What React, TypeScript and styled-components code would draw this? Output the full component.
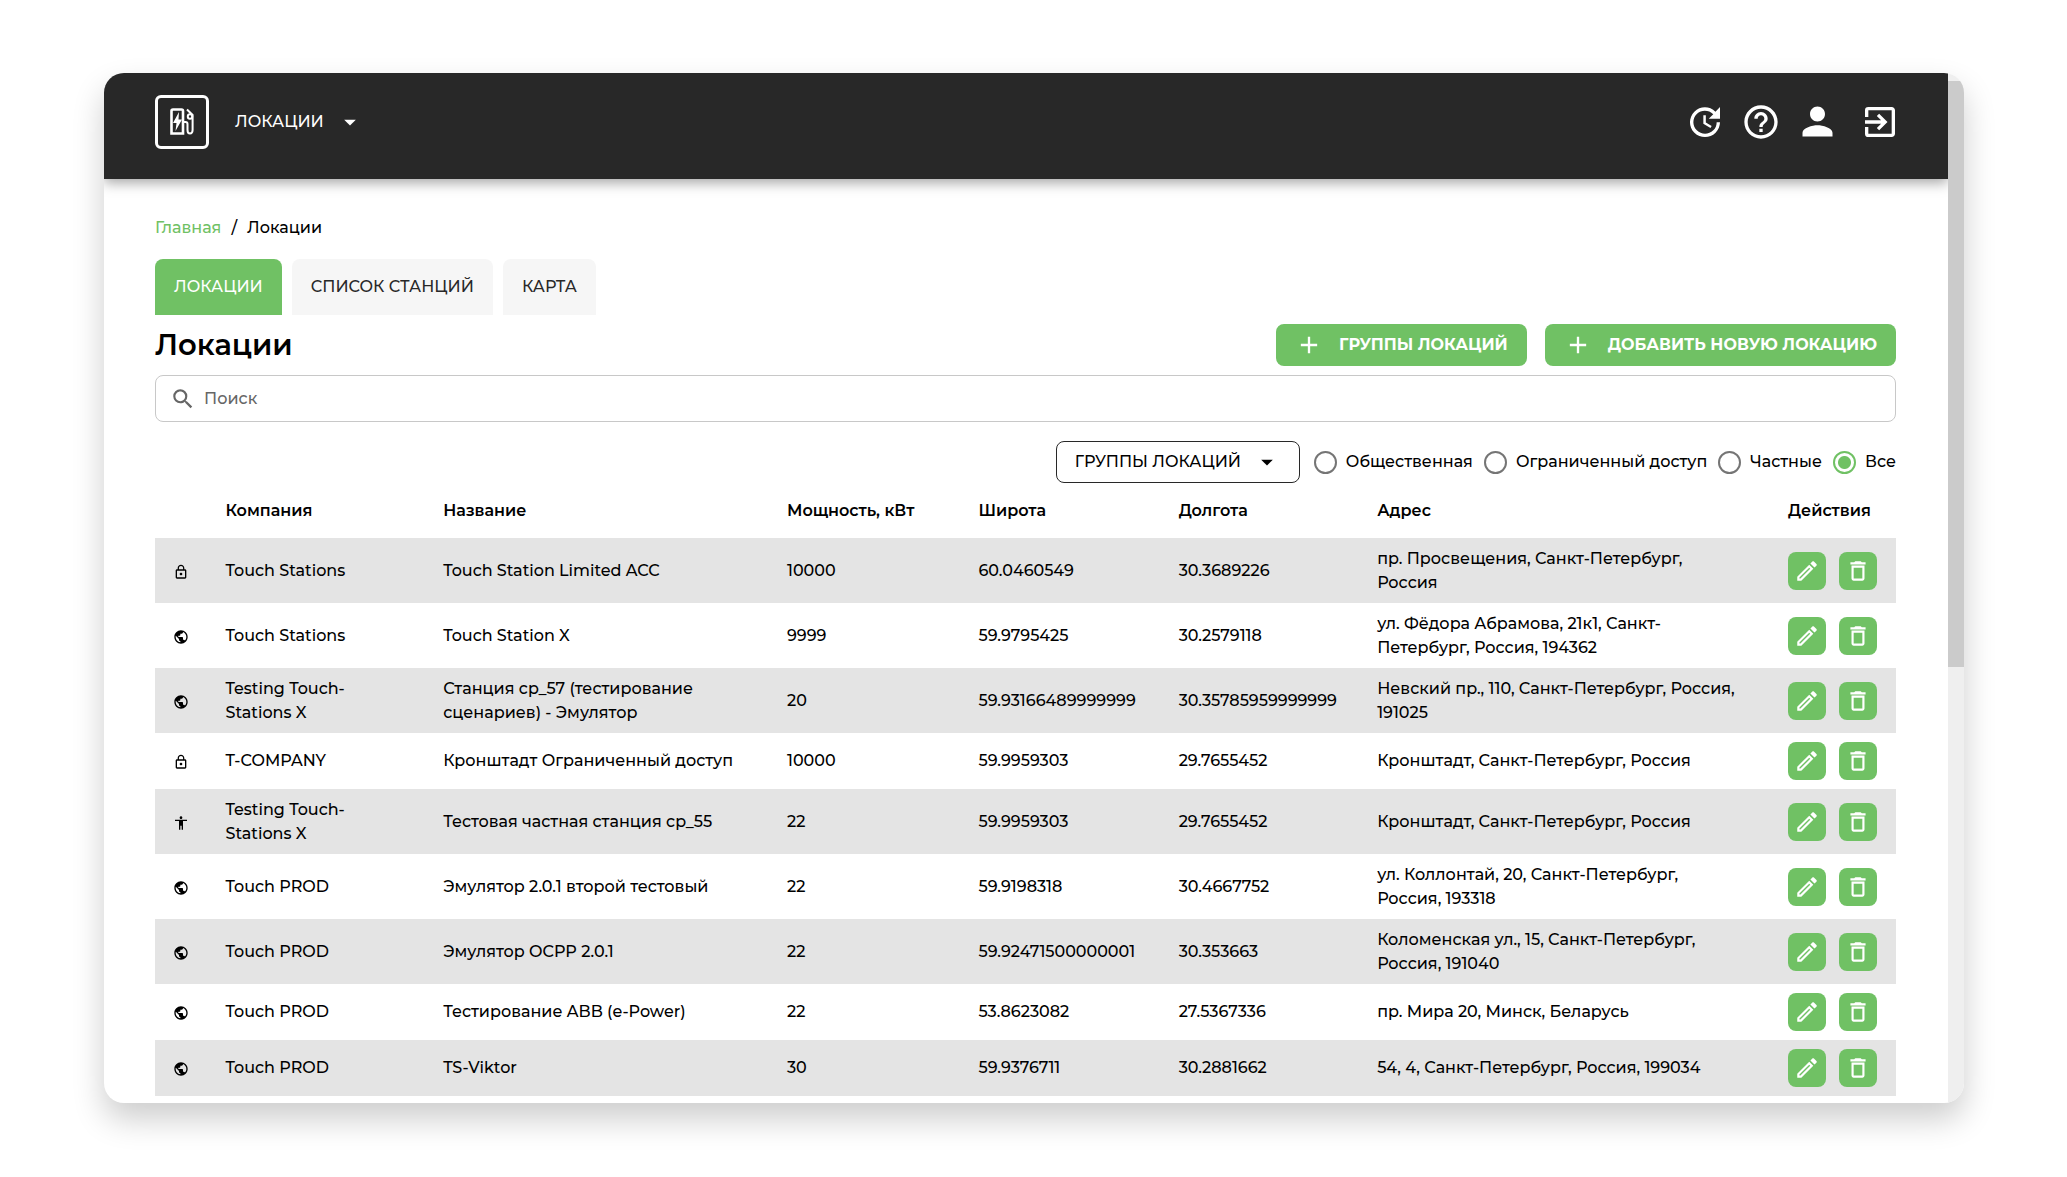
import React, { useState } from 'react';
import styled, { createGlobalStyle } from 'styled-components';
import { MdUpdate, MdHelpOutline, MdPerson, MdExitToApp, MdSearch, MdAdd, MdArrowDropDown, MdOutlineEdit, MdDeleteOutline, MdLockOutline, MdPublic, MdAccessibility } from 'react-icons/md';

const green = '#70c164';

const GlobalStyle = createGlobalStyle`
  *, *::before, *::after { box-sizing: border-box; }
  body {
    margin: 0;
    background: #fff;
    color: #000;
    font: 500 16px/24px Montserrat, Inter, "Liberation Sans", sans-serif;
  }
  button, input { font: inherit; color: inherit; margin: 0; }
`;

const Page = styled.div`
  height: 100vh;
  padding: 73px 103px 74px 104px;
  overflow: hidden;
`;

const Window = styled.div`
  display: flex;
  height: 100%;
  border-radius: 20px;
  overflow: hidden;
  background: #fff;
  box-shadow: 0 16px 32px rgba(0, 0, 0, 0.2);
`;

const Viewport = styled.div`
  flex: 1;
  min-width: 0;
  overflow: hidden;
`;

const ScrollTrack = styled.div`
  flex: none;
  width: 16px;
  padding-top: 8px;
  background: #efefef;
`;

const ScrollThumb = styled.div`
  height: 57.3%;
  background: #cbcbcb;
`;

const Header = styled.header`
  display: flex;
  align-items: center;
  justify-content: space-between;
  height: 106px;
  padding: 0 48px 9px 51px;
  background: #282828;
  color: #fff;
  box-shadow: 0 4px 12px rgba(0, 0, 0, 0.35);
`;

const HeaderGroup = styled.div`
  display: flex;
  align-items: center;
`;

const Logo = styled.a`
  display: grid;
  place-items: center;
  width: 54px;
  height: 54px;
  margin-right: 26px;
  border: 3px solid #fff;
  border-radius: 6px;
`;

const MenuButton = styled.button`
  display: flex;
  align-items: center;
  gap: 12px;
  padding: 0;
  border: 0;
  background: none;
  svg { width: 28px; height: 28px; }
`;

const HeaderIcon = styled.button<{ $gap?: number; $size?: number }>`
  display: grid;
  padding: 0;
  border: 0;
  margin-left: ${(p) => p.$gap ?? 16}px;
  background: none;
  svg { width: ${(p) => p.$size ?? 40}px; height: ${(p) => p.$size ?? 40}px; }
`;

const Content = styled.main`
  padding: 37px 52px 0 51px;
`;

const Breadcrumbs = styled.nav`
  display: flex;
  gap: 10px;
  a { color: ${green}; text-decoration: none; }
`;

const Tabs = styled.div`
  display: flex;
  gap: 10px;
  margin-top: 19px;
`;

const Tab = styled.button<{ $active?: boolean }>`
  height: 56px;
  padding: 0 19px;
  border: 0;
  border-radius: 8px 8px 0 0;
  background: ${(p) => (p.$active ? green : '#f6f6f6')};
  color: ${(p) => (p.$active ? '#fff' : '#282828')};
`;

const TitleRow = styled.div`
  display: flex;
  align-items: center;
  justify-content: space-between;
  margin-top: 9px;
`;

const Title = styled.h1`
  margin: 0;
  font-size: 29px;
  line-height: 42px;
  font-weight: 600;
`;

const Buttons = styled.div`
  display: flex;
  gap: 18px;
`;

const AddButton = styled.button`
  display: flex;
  align-items: center;
  gap: 16px;
  height: 42px;
  padding: 0 19px;
  border: 0;
  border-radius: 8px;
  background: ${green};
  color: #fff;
  font-weight: 700;
  svg { width: 28px; height: 28px; }
`;

const Search = styled.label`
  display: flex;
  align-items: center;
  gap: 8px;
  height: 47px;
  margin-top: 9px;
  padding: 0 14px;
  border: 1px solid #c8c8c8;
  border-radius: 8px;
  svg { flex: none; width: 26px; height: 26px; color: #666; }
`;

const SearchInput = styled.input`
  flex: 1;
  border: 0;
  padding: 0;
  outline: 0;
  background: none;
  &::placeholder { color: #666; opacity: 1; }
`;

const Filters = styled.div`
  display: flex;
  align-items: center;
  justify-content: flex-end;
  gap: 11px;
  margin-top: 19px;
`;

const GroupButton = styled.button`
  display: flex;
  align-items: center;
  justify-content: space-between;
  width: 244px;
  height: 42px;
  margin-right: 3px;
  padding: 0 18px;
  border: 1px solid #282828;
  border-radius: 8px;
  background: #fff;
  svg { width: 28px; height: 28px; }
`;

const RadioLabel = styled.label`
  display: flex;
  align-items: center;
  gap: 9px;
`;

const Radio = styled.input`
  appearance: none;
  width: 23px;
  height: 23px;
  border: 2px solid #757575;
  border-radius: 50%;
  background: #fff;
  &:checked {
    border-color: ${green};
    background: radial-gradient(circle, ${green} 6px, #fff 7px);
  }
`;

const Table = styled.table`
  width: 100%;
  table-layout: fixed;
  border-collapse: collapse;
  text-align: left;
`;

const Col = styled.col<{ $w?: number }>`
  width: ${(p) => (p.$w ? `${p.$w}%` : 'auto')};
`;

const Th = styled.th`
  height: 55px;
  padding: 0;
  font-weight: 600;
`;

const Row = styled.tr`
  &:nth-child(odd) { background: #e4e4e4; }
`;

const Td = styled.td<{ $tall?: boolean }>`
  height: ${(p) => (p.$tall ? 65 : 56)}px;
  padding: 0 44px 0 0;
`;

const KindCell = styled(Td)`
  padding: 2px 0 0 18px;
  svg { display: block; width: 16px; height: 16px; }
`;

const ActionCell = styled(Td)`
  padding: 0;
`;

const Actions = styled.div`
  display: flex;
  gap: 13px;
`;

const ActionButton = styled.button`
  display: grid;
  flex: none;
  place-items: center;
  width: 38px;
  height: 38px;
  padding: 0;
  border: 0;
  border-radius: 8px;
  background: ${green};
  color: #fff;
  svg { width: 26px; height: 26px; }
`;

type Kind = 'lock' | 'public' | 'private';

const kindIcons = { lock: MdLockOutline, public: MdPublic, private: MdAccessibility };

const rows: [Kind, string, string, string, string, string, string, boolean][] = [
  ['lock', 'Touch Stations', 'Touch Station Limited ACC', '10000', '60.0460549', '30.3689226', 'пр. Просвещения, Санкт-Петербург, Россия', true],
  ['public', 'Touch Stations', 'Touch Station X', '9999', '59.9795425', '30.2579118', 'ул. Фёдора Абрамова, 21к1, Санкт-Петербург, Россия, 194362', true],
  ['public', 'Testing Touch-Stations X', 'Станция cp_57 (тестирование сценариев) - Эмулятор', '20', '59.93166489999999', '30.35785959999999', 'Невский пр., 110, Санкт-Петербург, Россия, 191025', true],
  ['lock', 'T-COMPANY', 'Кронштадт Ограниченный доступ', '10000', '59.9959303', '29.7655452', 'Кронштадт, Санкт-Петербург, Россия', false],
  ['private', 'Testing Touch-Stations X', 'Тестовая частная станция cp_55', '22', '59.9959303', '29.7655452', 'Кронштадт, Санкт-Петербург, Россия', true],
  ['public', 'Touch PROD', 'Эмулятор 2.0.1 второй тестовый', '22', '59.9198318', '30.4667752', 'ул. Коллонтай, 20, Санкт-Петербург, Россия, 193318', true],
  ['public', 'Touch PROD', 'Эмулятор OCPP 2.0.1', '22', '59.92471500000001', '30.353663', 'Коломенская ул., 15, Санкт-Петербург, Россия, 191040', true],
  ['public', 'Touch PROD', 'Тестирование ABB (e-Power)', '22', '53.8623082', '27.5367336', 'пр. Мира 20, Минск, Беларусь', false],
  ['public', 'Touch PROD', 'TS-Viktor', '30', '59.9376711', '30.2881662', '54, 4, Санкт-Петербург, Россия, 199034', false],
];

const access = ['Общественная', 'Ограниченный доступ', 'Частные', 'Все'];

function StationLogo() {
  return (
    <svg width="24" height="27" viewBox="0 0 24 27" fill="none" stroke="#fff" strokeWidth="2">
      <path d="M1.500 25.500V3Q1.500 1.500 3 1.500H11.500Q13 1.500 13 3V25.500Z" strokeWidth="2.600" />
      <path d="M9 4L3 15H6.500L5.500 23L12 11.500H8.500Z" fill="#fff" stroke="none" />
      <path d="M14 14H15.500Q17.500 14 17.500 16V22Q17.500 25.500 20 25.500T22.600 22V7L17 1.500" />
      <circle cx="20" cy="8.500" r="2.200" />
    </svg>
  );
}

export default function App() {
  const [selected, setSelected] = useState('Все');
  return (
    <>
      <GlobalStyle />
      <Page>
        <Window>
          <Viewport>
            <Header>
              <HeaderGroup>
                <Logo href="#" aria-label="Touch"><StationLogo /></Logo>
                <MenuButton>ЛОКАЦИИ <MdArrowDropDown /></MenuButton>
              </HeaderGroup>
              <HeaderGroup>
                <HeaderIcon aria-label="История"><MdUpdate /></HeaderIcon>
                <HeaderIcon aria-label="Помощь"><MdHelpOutline /></HeaderIcon>
                <HeaderIcon $gap={14} $size={45} aria-label="Профиль"><MdPerson /></HeaderIcon>
                <HeaderIcon $gap={20} aria-label="Выход"><MdExitToApp /></HeaderIcon>
              </HeaderGroup>
            </Header>
            <Content>
              <Breadcrumbs>
                <a href="#">Главная</a><span>/</span><span>Локации</span>
              </Breadcrumbs>
              <Tabs>
                <Tab $active>ЛОКАЦИИ</Tab>
                <Tab>СПИСОК СТАНЦИЙ</Tab>
                <Tab>КАРТА</Tab>
              </Tabs>
              <TitleRow>
                <Title>Локации</Title>
                <Buttons>
                  <AddButton><MdAdd />ГРУППЫ ЛОКАЦИЙ</AddButton>
                  <AddButton><MdAdd />ДОБАВИТЬ НОВУЮ ЛОКАЦИЮ</AddButton>
                </Buttons>
              </TitleRow>
              <Search>
                <MdSearch />
                <SearchInput placeholder="Поиск" aria-label="Поиск" />
              </Search>
              <Filters>
                <GroupButton>ГРУППЫ ЛОКАЦИЙ <MdArrowDropDown /></GroupButton>
                {access.map((name) => (
                  <RadioLabel key={name}>
                    <Radio type="radio" name="access" checked={selected === name} onChange={() => setSelected(name)} />
                    {name}
                  </RadioLabel>
                ))}
              </Filters>
              <Table>
                <colgroup>
                  <Col $w={4.05} /><Col $w={12.5} /><Col $w={19.75} /><Col $w={11} /><Col $w={11.5} /><Col $w={11.4} /><Col /><Col $w={6.2} />
                </colgroup>
                <thead>
                  <tr>
                    <Th />
                    <Th>Компания</Th>
                    <Th>Название</Th>
                    <Th>Мощность, кВт</Th>
                    <Th>Широта</Th>
                    <Th>Долгота</Th>
                    <Th>Адрес</Th>
                    <Th>Действия</Th>
                  </tr>
                </thead>
                <tbody>
                  {rows.map(([kind, company, name, power, lat, lon, address, tall]) => {
                    const KindIcon = kindIcons[kind];
                    return (
                      <Row key={name}>
                        <KindCell $tall={tall}><KindIcon /></KindCell>
                        <Td>{company}</Td>
                        <Td>{name}</Td>
                        <Td>{power}</Td>
                        <Td>{lat}</Td>
                        <Td>{lon}</Td>
                        <Td>{address}</Td>
                        <ActionCell>
                          <Actions>
                            <ActionButton aria-label="Изменить"><MdOutlineEdit /></ActionButton>
                            <ActionButton aria-label="Удалить"><MdDeleteOutline /></ActionButton>
                          </Actions>
                        </ActionCell>
                      </Row>
                    );
                  })}
                </tbody>
              </Table>
            </Content>
          </Viewport>
          <ScrollTrack><ScrollThumb /></ScrollTrack>
        </Window>
      </Page>
    </>
  );
}
